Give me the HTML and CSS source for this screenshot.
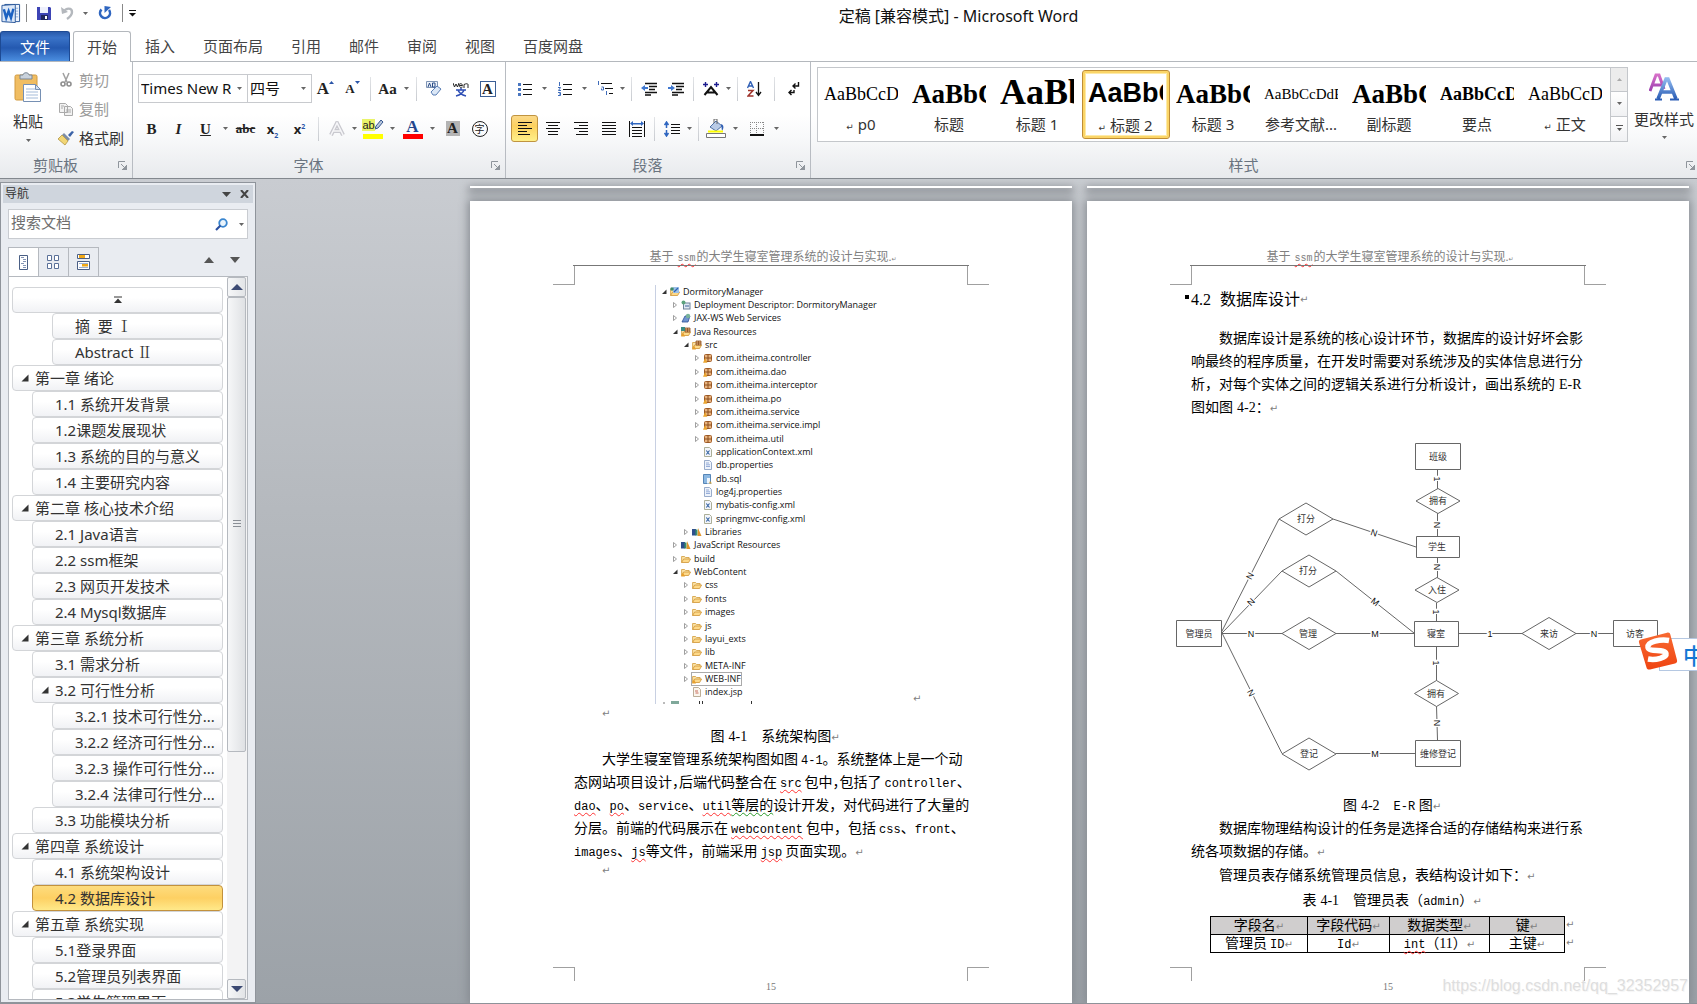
FILE: index.html
```html
<!DOCTYPE html>
<html lang="zh-CN">
<head>
<meta charset="utf-8">
<title>定稿 [兼容模式] - Microsoft Word</title>
<link rel="stylesheet" href="styles.css">
</head>
<body>
<svg class="defs" aria-hidden="true">
  <defs>
    <linearGradient id="gBlue" x1="0" y1="0" x2="0" y2="1"><stop offset="0" stop-color="#8fb8ee"/><stop offset="1" stop-color="#2a5db5"/></linearGradient>
    <linearGradient id="gPurple" x1="0" y1="0" x2="0" y2="1"><stop offset="0" stop-color="#d66fc8"/><stop offset="1" stop-color="#9b3fae"/></linearGradient>
    <linearGradient id="gOrange" x1="0" y1="0" x2="0" y2="1"><stop offset="0" stop-color="#f86a32"/><stop offset="1" stop-color="#ef4411"/></linearGradient>
  </defs>
  <symbol id="caret" viewBox="0 0 5 3"><path d="M0 0h5L2.500 3z" fill="#666"/></symbol>
  <symbol id="launch" viewBox="0 0 9 9"><path d="M.5 7V.5H7" fill="none" stroke="#8f959c"/><path d="M9 4v5H4zM3 3l4 4" fill="#8f959c" stroke="#8f959c"/></symbol>
  <symbol id="tri-open" viewBox="0 0 8 8"><path d="M7.500 .5v7h-7z" fill="#333"/></symbol>
  <symbol id="t-open" viewBox="0 0 6 6"><path d="M5.500 .5v4.500h-4.500z" fill="#333"/></symbol>
  <symbol id="t-shut" viewBox="0 0 6 6"><path d="M1.500 .5l3 2.500-3 2.500z" fill="#fff" stroke="#888" stroke-width=".8"/></symbol>
  <symbol id="folder" viewBox="0 0 10 10"><path d="M.6 8.500V2.500h3l1 1h3.500v1.500" fill="#fbe3a8" stroke="#d29a3a" stroke-width=".8"/><path d="M.6 8.500l2-3.500h7l-2 3.500z" fill="#fdd98a" stroke="#cf9433" stroke-width=".8"/></symbol>
  <symbol id="folderw" viewBox="0 0 10 10"><use href="#folder"/><path d="M0 9.500l2-4 2 4z" fill="#e8a02c"/></symbol>
  <symbol id="srcf" viewBox="0 0 10 10"><use href="#folder"/><path d="M4 1h5v4H4zM6.500 1v4M4 3h5" fill="#e7b37f" stroke="#8c4e1f" stroke-width=".8"/><path d="M0 9.500l2-4 2 4z" fill="#e8a02c"/></symbol>
  <symbol id="jres" viewBox="0 0 10 10"><use href="#srcf"/><path d="M0 0h4v4H0z" fill="#3b8c82"/></symbol>
  <symbol id="pkg" viewBox="0 0 10 10"><rect x="1.500" y="1.500" width="7" height="7" rx="1" fill="#e7b37f" stroke="#a5602b"/><path d="M5 1v8M1 5h8" stroke="#8c4e1f"/></symbol>
  <symbol id="pkgw" viewBox="0 0 10 10"><use href="#pkg"/><path d="M0 9.800l2.200-4.800 2.200 4.800z" fill="#eaa52f"/></symbol>
  <symbol id="doc" viewBox="0 0 10 10"><path d="M1.500 .5h5l2 2v7h-7z" fill="#eef3fb" stroke="#8fa3c4" stroke-width=".9"/><path d="M3 3h3M3 4.800h4M3 6.500h4" stroke="#7f9bcf" stroke-width=".8"/></symbol>
  <symbol id="xml" viewBox="0 0 10 10"><path d="M1.500 .5h5l2 2v7h-7z" fill="#f3f5fa" stroke="#a3a68c" stroke-width=".9"/><path d="M3.300 3.500l3.200 4M6.500 3.500l-3.200 4" stroke="#2f5f9f" stroke-width="1.100"/></symbol>
  <symbol id="sql" viewBox="0 0 10 10"><path d="M.5 .5h7v9h-7z" fill="#8cb8e2" stroke="#4a7cb0" stroke-width=".9"/><path d="M4 4h3v5.500H4z" fill="#eef5fc"/><path d="M7 7l2 2.500H6z" fill="#caa040"/></symbol>
  <symbol id="lib" viewBox="0 0 10 10"><path d="M0 2h4v6.500H0z" fill="#2f4f8c"/><path d="M3.500 2.500h2v6h-2z" fill="#39906c"/><path d="M6 1l3.500 8H5.500z" fill="#e0952c"/></symbol>
  <symbol id="proj" viewBox="0 0 10 10"><use href="#folder"/><path d="M3 0h6v6H3z" fill="#9cc0e8"/><path d="M4 5l4-4" stroke="#2f62b5" stroke-width="1.200"/><circle cx="2" cy="2" r="1.800" fill="#3f8a6c"/></symbol>
  <symbol id="dd" viewBox="0 0 10 10"><rect x="2.500" y="3" width="6.500" height="6" fill="#dfe8f2" stroke="#6c8299"/><circle cx="2.500" cy="2.500" r="2" fill="#5ba37c"/><path d="M4 6h4" stroke="#3d6398"/></symbol>
  <symbol id="jax" viewBox="0 0 10 10"><path d="M1 9l3-6h5l-2 6z" fill="#6f94cf" stroke="#2c4f95" stroke-width=".8"/><circle cx="7" cy="3" r="2.200" fill="#79b39b"/></symbol>
  <symbol id="jsp" viewBox="0 0 10 10"><path d="M1.500 .5h5l2 2v7h-7z" fill="#fbf6ee" stroke="#b4a58c" stroke-width=".9"/><path d="M3 4h3M3.500 6h3" stroke="#c76a5a"/></symbol>
</svg>

<header class="titlebar">
  <div class="qat">
    <svg class="wlogo" viewBox="0 0 21 21"><path d="M4 1h15.500v18H4z" fill="#eef4fc" stroke="#2a579a"/><path d="M12 5h6M12 8h6M12 11h6M12 14h6" stroke="#8fb0dc"/><path d="M1 2l14-1v19L1 19z" fill="#dce8f8" stroke="#2a579a"/><path d="M3 6l2.500 9 2.500-7 2.500 7L13 5.500" fill="none" stroke="#1c62c2" stroke-width="2.600"/></svg>
    <i class="vline"></i>
    <button aria-label="保存"><svg width="14" height="14" viewBox="0 0 14 14"><path d="M0 1h13l1 1v12H0z" fill="#3d44b5"/><path d="M3 1h8v6H3z" fill="#eef0fc"/><path d="M4 9h7v5H4z" fill="#20265e"/><path d="M8 10h2v3H8z" fill="#fff"/></svg></button>
    <button aria-label="撤消" class="undo"><svg width="13" height="14" viewBox="0 0 13 14"><path d="M0 1l1 7 6-2z" fill="#b4b8bd"/><path d="M2.500 6C5 1.500 11 1.500 11 6c0 3-2 5-5 7" fill="none" stroke="#b4b8bd" stroke-width="2.400"/></svg><svg class="caret"><use href="#caret"/></svg></button>
    <button aria-label="重复"><svg width="14" height="14" viewBox="0 0 14 14"><path d="M11 4A5 5 0 1 1 3.500 3.500" fill="none" stroke="#2f66c0" stroke-width="2.600"/><path d="M6.500 0v7L13 1z" fill="#2f66c0"/></svg></button>
    <i class="vline"></i>
    <button aria-label="自定义快速访问工具栏" class="more"><svg width="7" height="7" viewBox="0 0 7 7"><path d="M0 .5h7" stroke="#111"/><path d="M0 3h7L3.500 6.500z" fill="#111"/></svg></button>
  </div>
  <h1>定稿 [兼容模式] - Microsoft Word</h1>
</header>

<nav class="tabs">
  <button class="file">文件</button>
  <button class="tab active">开始</button>
  <button class="tab">插入</button><button class="tab">页面布局</button><button class="tab">引用</button><button class="tab">邮件</button><button class="tab">审阅</button><button class="tab">视图</button><button class="tab">百度网盘</button>
</nav>

<section class="ribbon">
  <div class="group clip">
    <div class="gbody clipbody">
      <button class="big">
        <svg width="28" height="30" viewBox="0 0 28 30"><rect x="1" y="3" width="22" height="25" rx="1.500" fill="#f0bd62" stroke="#d29a3f"/><path d="M6 7V3h3c0-3 6-3 6 0h3v4z" fill="#c9d2dc" stroke="#7a8794"/><path d="M9.500 12.500h12l5 5v12h-17z" fill="#fff" stroke="#7690b3"/><path d="M12 17h9M12 20h12M12 23h12M12 26h12" stroke="#a4bbd9"/><path d="M21.500 12.500v5h5z" fill="#d5e2f3" stroke="#7690b3"/></svg>
        <span>粘贴</span><svg class="caret"><use href="#caret"/></svg>
      </button>
      <div class="cliplist">
        <button class="off"><svg width="16" height="16" viewBox="0 0 16 16"><path d="M5 1l4 9M11 1L7 10" stroke="#a0a0a0" stroke-width="1.500"/><circle cx="5" cy="12" r="2" fill="none" stroke="#8f8f8f" stroke-width="1.600"/><circle cx="11" cy="12" r="2" fill="none" stroke="#8f8f8f" stroke-width="1.600"/></svg>剪切</button>
        <button class="off"><svg width="16" height="16" viewBox="0 0 16 16"><path d="M1.500 2.500h6l2 2v7h-8zM6.500 5.500h6l2 2v7h-8z" fill="#f2f2f2" stroke="#aaa"/><path d="M8 9h5M8 11h5M3 5h3M3 7h2" stroke="#aaa"/></svg>复制</button>
        <button><svg width="16" height="16" viewBox="0 0 16 16"><path d="M10 5l4-4 2 1-4 5z" fill="#3b63a8"/><path d="M6 3l6 6-2 2-6-6z" fill="#7e8ea6"/><path d="M4 5l6 6-3 4-7-6z" fill="#f2d675" stroke="#a98b35" stroke-width=".7"/></svg>格式刷</button>
      </div>
    </div>
    <div class="glabel">剪贴板<svg class="launch"><use href="#launch"/></svg></div>
  </div>

  <div class="group font">
    <div class="gbody">
      <div class="row">
        <label class="combo w110"><select aria-label="字体"><option>Times New Roman</option></select><svg class="caret"><use href="#caret"/></svg></label>
        <label class="combo w64"><select aria-label="字号"><option>四号</option></select><svg class="caret"><use href="#caret"/></svg></label>
        <button class="tb serif" aria-label="增大字体"><b class="f17">A</b><svg class="tick" viewBox="0 0 5 3"><path d="M0 3h5L2.500 0z" fill="#2a55a8"/></svg></button>
        <button class="tb serif" aria-label="缩小字体"><b class="f13">A</b><svg class="tick" viewBox="0 0 5 3"><path d="M0 0h5L2.500 3z" fill="#2a55a8"/></svg></button>
        <i class="sep"></i>
        <button class="dd w38 serif"><span><b class="f15">Aa</b></span><svg class="caret"><use href="#caret"/></svg></button>
        <i class="sep"></i>
        <button class="tb" aria-label="清除格式"><svg width="16" height="16" viewBox="0 0 16 16"><path d="M.5 .5h11v6H.5z" fill="#eef3fa" stroke="#7f95b5"/><path d="M2 6l1.500-4L5 6M6.500 2v4H9V2z" fill="none" stroke="#2b4d87"/><path d="M5 11l6-6 4 3-5 6H7z" fill="#dbe7f6" stroke="#5a7eb5"/></svg></button>
        <button class="tb" aria-label="拼音指南"><svg width="16" height="16" viewBox="0 0 16 16"><path d="M0 2l1.500 4L3 3l1.500 3L6 2M6.500 4.500h3C9 2 6.500 2 6.500 4.500S8 6.500 9.500 6M11 7V3.500c2-1 4-1 4 0V7" fill="none" stroke="#222"/><path d="M3 9h10M8 7v2M5 9c1 3 4 5 8 6M11 9c-1 3-4 5-8 6" fill="none" stroke="#2f4fb5" stroke-width="1.500"/></svg></button>
        <button class="tb serif" aria-label="字符边框"><b class="boxed">A</b></button>
      </div>
      <div class="row">
        <button class="tb serif"><b class="f15">B</b></button>
        <button class="tb serif"><b class="f15 it">I</b></button>
        <button class="dd w40 serif"><span><b class="f15 un">U</b></span><svg class="caret"><use href="#caret"/></svg></button>
        <button class="tb serif"><b class="f13 st">abc</b></button>
        <button class="tb"><b class="f13">x<sub>2</sub></b></button>
        <button class="tb"><b class="f13">x<sup>2</sup></b></button>
        <i class="sep s10"></i>
        <button class="dd w36" aria-label="文本效果"><span><svg width="16" height="16" viewBox="0 0 16 16"><path d="M2 14L8 2l6 12M4.500 10h7" fill="none" stroke="#c9c9cf" stroke-width="4"/><path d="M2 14L8 2l6 12M4.500 10h7" fill="none" stroke="#f6f6f8" stroke-width="1.500"/></svg></span><svg class="caret"><use href="#caret"/></svg></button>
        <button class="dd w40" aria-label="突出显示"><span class="hl"><em>ab</em><svg width="9" height="11" viewBox="0 0 9 11"><path d="M0 10l1-3 5-6 2 2-5 6z" fill="#b9c7dc" stroke="#35578f"/></svg></span><svg class="caret"><use href="#caret"/></svg></button>
        <button class="dd w40 serif" aria-label="字体颜色"><span><b class="fc">A</b></span><svg class="caret"><use href="#caret"/></svg></button>
        <button class="tb serif" aria-label="字符底纹"><b class="shade">A</b></button>
        <button class="tb" aria-label="带圈字符"><span class="ring">字</span></button>
      </div>
    </div>
    <div class="glabel">字体<svg class="launch"><use href="#launch"/></svg></div>
  </div>

  <div class="group para">
    <div class="gbody">
      <div class="row">
        <button class="dd w40" aria-label="项目符号"><span><svg width="14" height="14" viewBox="0 0 14 14"><path d="M5 2.500h9M5 7.500h9M5 12.500h9" stroke="#111"/><path d="M0 1h3v3H0zM0 6h3v3H0zM0 11h3v3H0z" fill="#4a76c0"/></svg></span><svg class="caret"><use href="#caret"/></svg></button>
        <button class="dd w40" aria-label="编号"><span><svg width="14" height="14" viewBox="0 0 14 14"><path d="M5 2.500h9M5 7.500h9M5 12.500h9" stroke="#111"/><path d="M1.500 0v4M0 5.500h2.500L.5 8.500h2.500M0 10.500h2.500v3H0M1 12h1.500" fill="none" stroke="#3f6cba"/></svg></span><svg class="caret"><use href="#caret"/></svg></button>
        <button class="dd w36" aria-label="多级列表"><span><svg width="16" height="15" viewBox="0 0 16 15"><path d="M4 2.500h11M8 7.500h8M12 12.500h4" stroke="#111"/><path d="M1.500 0v4M4.500 6h2v3h-2V7.500M9.500 10v4" fill="none" stroke="#3f6cba"/></svg></span><svg class="caret"><use href="#caret"/></svg></button>
        <i class="sep"></i>
        <button class="tb" aria-label="减少缩进量"><svg width="16" height="14" viewBox="0 0 16 14"><path d="M4 1.500h12M8 4.500h8M8 7.500h6M4 10.500h12M4 13h6" stroke="#111" stroke-width="1.500"/><path d="M0 6l4-3v2h3v2H4v2z" fill="#3f78d0"/></svg></button>
        <button class="tb" aria-label="增加缩进量"><svg width="16" height="14" viewBox="0 0 16 14"><path d="M4 1.500h12M8 4.500h8M8 7.500h6M4 10.500h12M4 13h6" stroke="#111" stroke-width="1.500"/><path d="M7 6L3 3v2H0v2h3v2z" fill="#3f78d0"/></svg></button>
        <i class="sep"></i>
        <button class="dd w36" aria-label="中文版式"><span><svg width="16" height="14" viewBox="0 0 16 14"><path d="M1.500 13L8 5l6.500 8M4 10.500h8" fill="none" stroke="#111" stroke-width="2"/><path d="M0 2.500h5M2.500 0v5M11 2.500h5M13.500 0v5" stroke="#1d1d8f" stroke-width="1.400"/></svg></span><svg class="caret"><use href="#caret"/></svg></button>
        <i class="sep"></i>
        <button class="tb" aria-label="排序"><svg width="15" height="16" viewBox="0 0 15 16"><path d="M.5 7L3.500 .5 6.500 7M1.500 5h4" fill="none" stroke="#2f5fb5" stroke-width="1.400"/><path d="M1 9.500h5L1 15h5.500" fill="none" stroke="#a0342c" stroke-width="1.500"/><path d="M11.500 1v13M9 11l2.500 3.500L14 11" fill="none" stroke="#111" stroke-width="1.300"/></svg></button>
        <i class="sep s12"></i>
        <button class="tb" aria-label="显示编辑标记"><svg width="12" height="14" viewBox="0 0 12 14"><path d="M10.500 0v4H5M7.500 1.500L5 4l2.500 2.500M6 8v2.500H1M3.500 8L1 10.500 3.500 13" fill="none" stroke="#111" stroke-width="1.400"/></svg></button>
      </div>
      <div class="row tight">
        <button class="tb on" aria-label="左对齐"><svg width="14" height="13" viewBox="0 0 14 13"><path d="M0 .5h14M0 3.500h9M0 6.500h14M0 9.500h9M0 12.500h12" stroke="#111"/></svg></button>
        <button class="tb" aria-label="居中"><svg width="14" height="13" viewBox="0 0 14 13"><path d="M0 .5h14M2 3.500h10M0 6.500h14M2 9.500h10M2 12.500h10" stroke="#111"/></svg></button>
        <button class="tb" aria-label="右对齐"><svg width="14" height="13" viewBox="0 0 14 13"><path d="M0 .5h14M5 3.500h9M0 6.500h14M5 9.500h9M2 12.500h12" stroke="#111"/></svg></button>
        <button class="tb" aria-label="两端对齐"><svg width="14" height="13" viewBox="0 0 14 13"><path d="M0 .5h14M0 3.500h14M0 6.500h14M0 9.500h14M0 12.500h14" stroke="#111"/></svg></button>
        <button class="tb" aria-label="分散对齐"><svg width="16" height="16" viewBox="0 0 16 16"><path d="M.5 0v16M15.500 0v16M3 6.500h10M3 9.500h10M3 12.500h10M3 15.500h10" stroke="#111"/><path d="M1 2.500L4 0v2h8V0l3 2.500L12 5V3.500H4V5z" fill="#2f66c0"/></svg></button>
        <i class="sep s6"></i>
        <button class="dd w36" aria-label="行距"><span><svg width="16" height="16" viewBox="0 0 16 16"><path d="M7 3.500h9M7 6.500h9M7 9.500h9M7 12.500h9" stroke="#111"/><path d="M2.500 1v6M.5 4l2-3 2 3M2.500 9v6M.5 12l2 3 2-3" fill="none" stroke="#2f66c0" stroke-width="1.500"/></svg></span><svg class="caret"><use href="#caret"/></svg></button>
        <i class="sep s6"></i>
        <button class="dd w40" aria-label="底纹"><span><svg width="20" height="19" viewBox="0 0 20 19"><path d="M4 8l6-6 6 5-6 5z" fill="#b9cbe6" stroke="#4c6fa5"/><path d="M8 4V0h3v5" fill="none" stroke="#666"/><path d="M15 5c3 1 3 4 1 7z" fill="#2f5fb5"/><path d="M2 12.500h15" stroke="#ff0" stroke-width="2"/><path d="M.5 14.500h19v4H.5z" fill="#fff" stroke="#777"/></svg></span><svg class="caret"><use href="#caret"/></svg></button>
        <button class="dd w40" aria-label="边框"><span><svg width="14" height="14" viewBox="0 0 14 14"><path d="M.5 0v12M6.500 0v12M13.500 0v12M0 .5h14M0 6.500h14" stroke="#888" stroke-dasharray="1 1"/><path d="M0 13h14" stroke="#111" stroke-width="2"/></svg></span><svg class="caret"><use href="#caret"/></svg></button>
      </div>
    </div>
    <div class="glabel">段落<svg class="launch"><use href="#launch"/></svg></div>
  </div>

  <div class="group styles">
    <div class="gbody stylebody">
      <div class="gallery">
        <button class="style"><span class="pv s18">AaBbCcD</span><span><small>↵</small> p0</span></button>
        <button class="style"><span class="pv s27">AaBbC</span><span>标题</span></button>
        <button class="style"><span class="pv s36">AaBb</span><span>标题 1</span></button>
        <button class="style sel"><span class="pv s27 sans">AaBbC</span><span><small>↵</small> 标题 2</span></button>
        <button class="style"><span class="pv s27">AaBbC</span><span>标题 3</span></button>
        <button class="style"><span class="pv s15">AaBbCcDdE</span><span>参考文献...</span></button>
        <button class="style"><span class="pv s27">AaBbC</span><span>副标题</span></button>
        <button class="style"><span class="pv s18 bold">AaBbCcD</span><span>要点</span></button>
        <button class="style"><span class="pv s18">AaBbCcD</span><span><small>↵</small> 正文</span></button>
        <div class="gscroll">
          <button class="dis" aria-label="上一行"><svg width="5" height="3" viewBox="0 0 5 3"><path d="M0 3h5L2.500 0z" fill="#aaa"/></svg></button>
          <button aria-label="下一行"><svg class="caret"><use href="#caret"/></svg></button>
          <button aria-label="其他"><svg width="7" height="7" viewBox="0 0 7 7"><path d="M0 .5h7" stroke="#555"/><path d="M1 3h5L3.500 6z" fill="#555"/></svg></button>
        </div>
      </div>
      <button class="big change">
        <svg width="30" height="28" viewBox="0 0 30 28"><path d="M1 18L7 2h3l5 14M4 12h8" fill="none" stroke="url(#gPurple)" stroke-width="3"/><path d="M9 26L17 6h2l8 20M12 19h11" fill="none" stroke="url(#gBlue)" stroke-width="3.500"/><path d="M6 26.500h7M21 26.500h9" stroke="#2a5db5" stroke-width="2"/></svg>
        <span>更改样式</span><svg class="caret"><use href="#caret"/></svg>
      </button>
    </div>
    <div class="glabel">样式<svg class="launch"><use href="#launch"/></svg></div>
  </div>
</section>

<main class="work">
  <aside class="navpane">
    <div class="nvhead"><span>导航</span><button aria-label="任务窗格选项"><svg width="9" height="5" viewBox="0 0 9 5"><path d="M0 0h9L4.500 5z" fill="#444"/></svg></button><button aria-label="关闭"><svg width="9" height="8" viewBox="0 0 9 8"><path d="M1 0l7 8M8 0L1 8" stroke="#444" stroke-width="2"/></svg></button></div>
    <div class="search"><input type="text" placeholder="搜索文档" aria-label="搜索文档"><button aria-label="搜索"><svg width="13" height="13" viewBox="0 0 13 13"><circle cx="8" cy="5" r="3.800" fill="#eaf4fc" stroke="#3a86cf" stroke-width="1.800"/><path d="M5.500 7.500L1 12" stroke="#2a4fa0" stroke-width="2.200"/></svg></button><button aria-label="搜索选项"><svg class="caret"><use href="#caret"/></svg></button></div>
    <div class="nvtabs">
      <button class="active" aria-label="标题"><svg width="10" height="15" viewBox="0 0 10 15"><path d="M.5 .5h8v14h-8z" fill="#fff" stroke="#4a5f85"/><path d="M2 2.500h3M4 4.500h3M4 6.500h3M2 8.500h3M4 10.500h3M4 12.500h3" stroke="#8495b5"/></svg></button>
      <button aria-label="页面"><svg width="13" height="15" viewBox="0 0 13 15"><path d="M.5 .5h4v5h-4zM7.500 .5h4v5h-4zM.5 8.500h4v5h-4zM7.500 8.500h4v5h-4z" fill="#fff" stroke="#5a7099"/></svg></button>
      <button aria-label="结果"><svg width="14" height="16" viewBox="0 0 14 16"><path d="M.5 .5h12v4H.5zM.5 7.500h12v8H.5z" fill="#fff" stroke="#4a5f85"/><path d="M2 2.500h6M5 11h6" stroke="#f0a818" stroke-width="3"/><path d="M2 9.500h9M2 13.500h9" stroke="#9db0cf"/></svg></button>
      <span class="updown"><svg width="10" height="6" viewBox="0 0 10 6"><path d="M0 6h10L5 0z" fill="#555"/></svg><svg width="10" height="6" viewBox="0 0 10 6"><path d="M0 0h10L5 6z" fill="#555"/></svg></span>
    </div>
    <div class="outline">
      <div class="items">
        <a href="#" class="top" aria-label="跳转到文档开头"><svg width="8" height="7" viewBox="0 0 8 7"><path d="M0 .5h8" stroke="#333"/><path d="M0 6.500h8L4 2z" fill="#333"/></svg></a>
        <a href="#" class="l3">摘&nbsp; 要&nbsp; <span class="roman">Ⅰ</span></a>
        <a href="#" class="l3">Abstract&nbsp;<span class="roman">Ⅱ</span></a>
        <a href="#" class="l1"><svg><use href="#tri-open"/></svg>第一章 绪论</a>
        <a href="#" class="l2">1.1 系统开发背景</a>
        <a href="#" class="l2">1.2课题发展现状</a>
        <a href="#" class="l2">1.3 系统的目的与意义</a>
        <a href="#" class="l2">1.4 主要研究内容</a>
        <a href="#" class="l1"><svg><use href="#tri-open"/></svg>第二章 核心技术介绍</a>
        <a href="#" class="l2">2.1 Java语言</a>
        <a href="#" class="l2">2.2 ssm框架</a>
        <a href="#" class="l2">2.3 网页开发技术</a>
        <a href="#" class="l2">2.4 Mysql数据库</a>
        <a href="#" class="l1"><svg><use href="#tri-open"/></svg>第三章 系统分析</a>
        <a href="#" class="l2">3.1 需求分析</a>
        <a href="#" class="l2"><svg><use href="#tri-open"/></svg>3.2 可行性分析</a>
        <a href="#" class="l3">3.2.1 技术可行性分...</a>
        <a href="#" class="l3">3.2.2 经济可行性分...</a>
        <a href="#" class="l3">3.2.3 操作可行性分...</a>
        <a href="#" class="l3">3.2.4 法律可行性分...</a>
        <a href="#" class="l2">3.3 功能模块分析</a>
        <a href="#" class="l1"><svg><use href="#tri-open"/></svg>第四章 系统设计</a>
        <a href="#" class="l2">4.1 系统架构设计</a>
        <a href="#" class="l2 cur">4.2 数据库设计</a>
        <a href="#" class="l1"><svg><use href="#tri-open"/></svg>第五章 系统实现</a>
        <a href="#" class="l2">5.1登录界面</a>
        <a href="#" class="l2">5.2管理员列表界面</a>
        <a href="#" class="l2">5.3学生管理界面</a>
      </div>
      <div class="scroll">
        <button aria-label="向上滚动"><svg width="12" height="6" viewBox="0 0 12 6"><path d="M0 6h12L6 0z" fill="#3c4a73"/></svg></button>
        <div class="thumb"><i></i></div>
        <button aria-label="向下滚动"><svg width="12" height="6" viewBox="0 0 12 6"><path d="M0 0h12L6 6z" fill="#3c4a73"/></svg></button>
      </div>
    </div>
  </aside>

  <div class="canvas">
    <div class="prev"></div><div class="prev"></div>
    <article class="page">
      <header class="phead">基于<span class="ph-en sp">ssm</span>的大学生寝室管理系统的设计与实现.<span class="cr">↵</span></header>
      <div class="marks"><i></i><i></i></div>
      <div class="treewrap">
        <ul class="tree">
          <li class="d0"><svg><use href="#t-open"/></svg><svg class="ic"><use href="#proj"/></svg>DormitoryManager</li>
          <li class="d1"><svg><use href="#t-shut"/></svg><svg class="ic"><use href="#dd"/></svg>Deployment Descriptor: DormitoryManager</li>
          <li class="d1"><svg><use href="#t-shut"/></svg><svg class="ic"><use href="#jax"/></svg>JAX-WS Web Services</li>
          <li class="d1"><svg><use href="#t-open"/></svg><svg class="ic"><use href="#jres"/></svg>Java Resources</li>
          <li class="d2"><svg><use href="#t-open"/></svg><svg class="ic"><use href="#srcf"/></svg>src</li>
          <li class="d3"><svg><use href="#t-shut"/></svg><svg class="ic"><use href="#pkgw"/></svg>com.itheima.controller</li>
          <li class="d3"><svg><use href="#t-shut"/></svg><svg class="ic"><use href="#pkgw"/></svg>com.itheima.dao</li>
          <li class="d3"><svg><use href="#t-shut"/></svg><svg class="ic"><use href="#pkg"/></svg>com.itheima.interceptor</li>
          <li class="d3"><svg><use href="#t-shut"/></svg><svg class="ic"><use href="#pkgw"/></svg>com.itheima.po</li>
          <li class="d3"><svg><use href="#t-shut"/></svg><svg class="ic"><use href="#pkgw"/></svg>com.itheima.service</li>
          <li class="d3"><svg><use href="#t-shut"/></svg><svg class="ic"><use href="#pkgw"/></svg>com.itheima.service.impl</li>
          <li class="d3"><svg><use href="#t-shut"/></svg><svg class="ic"><use href="#pkg"/></svg>com.itheima.util</li>
          <li class="d3"><svg></svg><svg class="ic"><use href="#xml"/></svg>applicationContext.xml</li>
          <li class="d3"><svg></svg><svg class="ic"><use href="#doc"/></svg>db.properties</li>
          <li class="d3"><svg></svg><svg class="ic"><use href="#sql"/></svg>db.sql</li>
          <li class="d3"><svg></svg><svg class="ic"><use href="#doc"/></svg>log4j.properties</li>
          <li class="d3"><svg></svg><svg class="ic"><use href="#xml"/></svg>mybatis-config.xml</li>
          <li class="d3"><svg></svg><svg class="ic"><use href="#xml"/></svg>springmvc-config.xml</li>
          <li class="d2"><svg><use href="#t-shut"/></svg><svg class="ic"><use href="#lib"/></svg>Libraries</li>
          <li class="d1"><svg><use href="#t-shut"/></svg><svg class="ic"><use href="#lib"/></svg>JavaScript Resources</li>
          <li class="d1"><svg><use href="#t-shut"/></svg><svg class="ic"><use href="#folder"/></svg>build</li>
          <li class="d1"><svg><use href="#t-open"/></svg><svg class="ic"><use href="#folderw"/></svg>WebContent</li>
          <li class="d2"><svg><use href="#t-shut"/></svg><svg class="ic"><use href="#folder"/></svg>css</li>
          <li class="d2"><svg><use href="#t-shut"/></svg><svg class="ic"><use href="#folder"/></svg>fonts</li>
          <li class="d2"><svg><use href="#t-shut"/></svg><svg class="ic"><use href="#folder"/></svg>images</li>
          <li class="d2"><svg><use href="#t-shut"/></svg><svg class="ic"><use href="#folder"/></svg>js</li>
          <li class="d2"><svg><use href="#t-shut"/></svg><svg class="ic"><use href="#folder"/></svg>layui_exts</li>
          <li class="d2"><svg><use href="#t-shut"/></svg><svg class="ic"><use href="#folder"/></svg>lib</li>
          <li class="d2"><svg><use href="#t-shut"/></svg><svg class="ic"><use href="#folder"/></svg>META-INF</li>
          <li class="d2"><svg><use href="#t-shut"/></svg><span class="focus"><svg class="ic"><use href="#folderw"/></svg>WEB-INF</span></li>
          <li class="d2"><svg></svg><svg class="ic"><use href="#jsp"/></svg>index.jsp</li>
        </ul>
        <svg class="cut" width="90" height="4" viewBox="0 0 90 4"><path d="M0 3h2" stroke="#777"/><path d="M8 4V1h8v3z" fill="#7fa89a"/><path d="M36.500 1v3M39.500 1v3M88.500 1v3" stroke="#333"/></svg>
        <span class="cr">↵</span>
      </div>
      <p class="blank"><span class="cr">↵</span></p>
      <p class="caption">图<span class="tn">4-1</span>　系统架构图<span class="cr">↵</span></p>
      <p class="body">大学生寝室管理系统架构图如图<span class="en">4-1</span>。系统整体上是一个动<br>态网站项目设计<span class="half">，</span>后端代码整合在<span class="en sp">src</span>包中<span class="half">，</span>包括了<span class="en">controller</span>、<br><span class="en first sp">dao</span>、<span class="en first sp">po</span>、<span class="en first">service</span>、<span class="en first sp">util</span><span class="gr">等层的</span>设计开发，对代码进行了大量的<br>分层。前端的代码展示在<span class="en sp">webcontent</span>包中，包括<span class="en">css</span>、<span class="en first">front</span>、<br><span class="en first">images</span>、<span class="en first sp">js</span>等文件，前端采用<span class="en sp">jsp</span>页面实现。<span class="cr">↵</span></p>
      <p class="blank after"><span class="cr">↵</span></p>
      <div class="marks foot"><i></i><i></i></div>
      <footer class="pno">15</footer>
    </article>

    <article class="page">
      <header class="phead">基于<span class="ph-en sp">ssm</span>的大学生寝室管理系统的设计与实现.<span class="cr">↵</span></header>
      <div class="marks"><i></i><i></i></div>
      <h2><span class="tn">4.2</span>数据库设计<span class="cr">↵</span></h2>
      <p class="body">数据库设计是系统的核心设计环节，数据库的设计好坏会影<br>响最终的程序质量，在开发时需要对系统涉及的实体信息进行分<br>析，对每个实体之间的逻辑关系进行分析设计，画出系统的<span class="tn">E-R</span><br>图如图<span class="tn">4-2</span>：<span class="cr">↵</span></p>
      <svg class="er" width="495" height="340" viewBox="1170 436 495 340">
        <g fill="none" stroke="#666">
          <path d="M1437.500 470v19M1437.500 513v23M1437.500 558v20M1436.500 603v18M1436.500 647v34M1436.500 706l1 34M1333 519l83 28M1279 519l-58 114M1282 571l-60 62M1336 571l78 62M1222 633.500h60M1336 633.500h78M1459 633.500h63M1576 633.500h37M1222 633l60 120.500M1336 753.500h80"/>
        </g>
        <g fill="#fff" stroke="#666">
          <path d="M1415.500 443.500h45v26h-45zM1416.500 536.500h43v21h-43zM1176.500 620.500h45v26h-45zM1414.500 621.500h44v25h-44zM1613.500 620.500h44v26h-44zM1415.500 740.500h45v26h-45z"/>
          <path d="M1438 488.500l22 12.500-22 12.500-22-12.500zM1437 577.500l22 12.500-22 12.500-22-12.500zM1436.500 680.500l22 13-22 13-22-13zM1306 503l27 16-27 16-27-16zM1309 555l27 16-27 16-27-16zM1309 617.500l27 16-27 16-27-16zM1549 617.500l27 16-27 16-27-16zM1309 738l27 16-27 16-27-16z"/>
        </g>
        <g class="ertext">
          <text x="1438" y="460">班级</text><text x="1438" y="504">拥有</text><text x="1437" y="550">学生</text><text x="1437" y="593">入住</text>
          <text x="1306" y="522">打分</text><text x="1308" y="574">打分</text><text x="1199" y="637">管理员</text><text x="1308" y="637">管理</text><text x="1436" y="637">寝室</text><text x="1549" y="637">来访</text><text x="1635" y="637">访客</text><text x="1436" y="697">拥有</text><text x="1309" y="757">登记</text><text x="1438" y="757">维修登记</text>
        </g>
        <g class="erlab">
          <g transform="translate(1437 479) rotate(90)"><text y="3">1</text></g><g transform="translate(1437 525) rotate(90)"><text y="3">N</text></g><g transform="translate(1437 567) rotate(90)"><text y="3">N</text></g><g transform="translate(1436 612) rotate(90)"><text y="3">1</text></g>
          <g transform="translate(1374 533) rotate(18)"><text y="3">N</text></g><g transform="translate(1250 576) rotate(-63)"><text y="3">N</text></g><g transform="translate(1251 602) rotate(-46)"><text y="3">N</text></g><g transform="translate(1375 602) rotate(38)"><text y="3">M</text></g>
          <text x="1251" y="637">N</text><text x="1375" y="637">M</text><text x="1490" y="637">1</text><text x="1594" y="637">N</text>
          <g transform="translate(1436 663) rotate(90)"><text y="3">1</text></g><g transform="translate(1437 723) rotate(90)"><text y="3">N</text></g><g transform="translate(1251 693) rotate(63)"><text y="3">N</text></g><text x="1375" y="757">M</text>
        </g>
      </svg>
      <p class="caption">图<span class="tn">4-2</span>　<span class="en first">E-R</span> 图<span class="cr">↵</span></p>
      <p class="body">数据库物理结构设计的任务是选择合适的存储结构来进行系<br>统各项数据的存储。<span class="cr">↵</span></p>
      <p class="body next">管理员表存储系统管理员信息，表结构设计如下：<span class="cr">↵</span></p>
      <p class="caption tcap">表<span class="tn">4-1</span>　管理员表（<span class="en first">admin</span>）<span class="cr">↵</span></p>
      <div class="tablerow">
        <table>
          <thead><tr><th>字段名<span class="cr">↵</span></th><th>字段代码<span class="cr">↵</span></th><th>数据类型<span class="cr">↵</span></th><th>键<span class="cr">↵</span></th></tr></thead>
          <tbody><tr><td>管理员<span class="en">ID</span><span class="cr">↵</span></td><td><span class="en first">Id</span><span class="cr">↵</span></td><td><span class="en first sp">int</span>（11）<span class="cr">↵</span></td><td>主键<span class="cr">↵</span></td></tr></tbody>
        </table>
        <div class="rowends"><span class="cr">↵</span><span class="cr">↵</span></div>
      </div>
      <div class="marks foot"><i></i><i></i></div>
      <footer class="pno">15</footer>
    </article>
  </div>
</main>

<div class="watermark">https://blog.csdn.net/qq_32352957</div>
<div class="ime"><svg width="40" height="38" viewBox="0 0 40 38"><path d="M3 7.500L29 .7c2-.5 3 .3 3.400 2L39 28c.4 2-.3 3-2 3.400L12 37.500c-2 .4-3-.3-3.500-2L1 10.500c-.4-1.700.3-2.600 2-3z" fill="url(#gOrange)"/><path d="M31 8.500c-8-1.500-22 1-21 7 1 5 17 1 18 6 .8 4-10 7-18 5.500" fill="none" stroke="#fff" stroke-width="5.500"/></svg><span>中</span></div>
</body>
</html>
```
FILE: styles.css
```css
* { box-sizing: border-box; }
html, body { height: 100%; }
body {
  margin: 0;
  display: flex;
  flex-direction: column;
  overflow: hidden;
  position: relative;
  background: #fff;
  color: #333;
  font: 15px/20px "Noto Sans", "Noto Sans CJK SC", sans-serif;
}
.defs { position: absolute; width: 0; height: 0; }
button { border: 0; padding: 0; background: none; font: inherit; color: inherit; white-space: nowrap; }
svg { display: block; flex: none; }
.caret { width: 5px; height: 3px; }
p, h1, h2, ul { margin: 0; padding: 0; }

/* title bar */
.titlebar { height: 31px; flex: none; display: grid; grid-template-columns: 1fr auto 1fr; align-items: center; }
.titlebar h1 { font-size: 16px; font-weight: 400; color: #111; grid-column: 2; margin-left: 220px; }
.titlebar .qat { grid-column: 1; width: 0; }
.qat { display: flex; align-items: center; gap: 10px; padding-left: 1px; height: 26px; align-self: start; }
.wlogo { width: 20px; height: 21px; margin-right: -5px; }
.vline { width: 1px; height: 18px; background: #888; flex: none; }
.undo { display: flex; align-items: center; gap: 9px; }
.more { padding-left: 0; margin-left: -4px; }

/* tabs */
.tabs { display: flex; height: 31px; flex: none; border-bottom: 1px solid #b4b8bd; }
.tabs button { color: #444; }
.file { width: 70px; margin-right: 3px; border-radius: 3px 3px 0 0; background: linear-gradient(#2a5bab, #3a73c8 20%, #2459b0 55%, #4b8ee0); }
.tabs .file { color: #fff; border: 1px solid #1d4a94; border-bottom: 0; }
.tab { padding: 0 14px; }
.tab.active { background: #fff; border: 1px solid #b4b8bd; border-bottom: 0; padding: 0 13px; border-radius: 3px 3px 0 0; margin-bottom: -1px; }

/* ribbon */
.ribbon { display: flex; height: 117px; flex: none; border-bottom: 1px solid #83888e; background: linear-gradient(#fff 45%, #f8f9fa 65%, #e8eaed); }
.group { display: flex; flex-direction: column; border-right: 1px solid #b8bcc2; flex: none; }
.clip { width: 133px; }
.font { width: 373px; }
.para { width: 305px; }
.styles { flex: 1; border-right: 0; min-width: 0; }
.gbody { height: 92px; padding: 10px 0 0 5px; display: flex; flex-direction: column; gap: 7px; }
.glabel { height: 25px; display: grid; grid-template-columns: 1fr auto 1fr 20px; align-items: center; color: #6a7480; padding: 0 1px 1px 0; }
.glabel::before { content: ""; }
.glabel .launch { grid-column: 4; justify-self: end; width: 9px; height: 9px; margin-right: 4px; }
.styles .glabel .launch { margin-right: 1px; }
.clipbody { flex-direction: row; padding: 10px 0 0 6px; gap: 5px; }
.big { width: 44px; display: flex; flex-direction: column; align-items: center; gap: 9px; color: #333; }
.big .caret { margin-top: -1px; }
.cliplist { display: flex; flex-direction: column; gap: 9px; margin-top: -2px; }
.cliplist button { display: flex; align-items: center; gap: 5px; color: #333; padding-left: 3px; }
.cliplist .off { color: #9b9b9b; }

.row { display: flex; align-items: center; height: 33px; }
.tight { gap: 1px; }
.combo { display: grid; height: 29px; border: 1px solid #c8cace; background: #fff; align-items: center; }
.combo > * { grid-area: 1 / 1; }
.combo .caret { justify-self: end; margin-right: 5px; }
.combo select { appearance: none; border: 0; background: none; font: inherit; color: #111; width: 100%; height: 27px; padding: 0 16px 2px 2px; }
.w110 { width: 110px; }
.w64 { width: 65px; margin-left: -1px; }
.w36 { width: 36px; }
.w38 { width: 38px; }
.w40 { width: 40px; }
.tb { width: 27px; height: 27px; display: flex; align-items: center; justify-content: center; color: #222; }
.tb.on { border: 1px solid #c09440; border-radius: 3px; background: linear-gradient(#fbd98a, #fcd15f 40%, #fff08a); }
.dd { height: 27px; display: flex; align-items: center; justify-content: space-between; color: #222; }
.dd > span { width: 27px; display: flex; justify-content: center; }
.dd > .caret { margin: 0 auto; }
.sep { width: 8px; height: 24px; flex: none; background: linear-gradient(#e2e4e7, #c8cbd0) center / 1px 100% no-repeat; }
.s6 { width: 6px; }
.s10 { width: 10px; }
.s12 { width: 12px; }
.serif { font-family: "Liberation Serif", serif; }
.f17 { font-size: 17px; }
.f15 { font-size: 15px; }
.f13 { font-size: 13px; }
.it { font-style: italic; }
.un { text-decoration: underline; }
.st { text-decoration: line-through; }
.tick { width: 5px; height: 3px; align-self: flex-start; margin-top: 6px; }
sub, sup { font-size: 7px; line-height: 0; color: #2a55a8; }
.boxed { width: 16px; height: 16px; border: 1px solid #3b5f95; line-height: 14px; text-align: center; }
.shade { width: 14px; height: 15px; background: #b4b4b4; line-height: 15px; text-align: center; }
.ring { width: 16px; height: 16px; border: 1px solid #222; border-radius: 50%; font-size: 10px; line-height: 14px; }
.dd > .hl { width: 20px; margin: 0 3px 0 4px; border-bottom: 5px solid #ff0; height: 20px; }
.hl em { font: 11px/12px "Liberation Sans", sans-serif; background: #e9f36a; height: 12px; }
.fc { width: 20px; height: 20px; line-height: 15px; border-bottom: 5px solid #f00; color: #24468c; font-size: 17px; }

.stylebody { flex-direction: row; padding: 5px 2px 0 6px; gap: 5px; justify-content: space-between; }
.gallery { display: flex; height: 75px; border: 1px solid #c4c7cb; background: #fff; min-width: 0; flex: 0 1 812px; }
.style { width: 88px; flex: none; display: grid; grid-template-rows: 44px 20px; padding: 2px 8px 2px 6px; color: #333; align-items: center; }
.style.sel { border: 1px solid #bf8d35; border-radius: 3px; box-shadow: inset 0 0 0 2px #fbd567, inset 0 0 0 3px #fdeaa8; margin: 2px 0; padding: 0 6px 0 5px; }
.style.sel .pv { line-height: 45px; }
.pv { overflow: hidden; white-space: nowrap; text-align: left; color: #000; font-family: "Liberation Serif", serif; line-height: 48px; height: 44px; }
.style small { font: 9px/9px "DejaVu Sans", sans-serif; }
.s15 { font-size: 15px; }
.s18 { font-size: 18px; }
.s27 { font-size: 27px; font-weight: 700; }
.s36 { font-size: 36px; font-weight: 700; line-height: 44px; }
.bold { font-weight: 700; }
.sans { font-family: "Liberation Sans", sans-serif; }
.gscroll { width: 18px; display: grid; grid-template-rows: repeat(3, 1fr); margin-left: auto; border-left: 1px solid #c4c7cb; }
.gscroll button { display: grid; place-items: center; border-bottom: 1px solid #c4c7cb; background: linear-gradient(#fff, #f0f1f3); }
.gscroll .dis { background: #ececec; }
.gscroll button:last-child { border-bottom: 0; }
.change { width: 62px; padding-top: 6px; gap: 8px; align-self: flex-start; }

/* workspace */
.work { flex: 1; min-height: 0; display: flex; background: linear-gradient(#c9ccd1, #b5b9be 40%, #9ca2a8); border-bottom: 1px solid #8d9299; }
.navpane { width: 256px; flex: none; margin-top: 3px; border: 1px solid #8f949b; background: #e9ecf1; padding: 2px; display: flex; flex-direction: column; }
.nvhead { display: flex; align-items: center; height: 18px; flex: none; background: #cfd5dd; padding: 0 4px 0 2px; font-size: 12px; gap: 9px; }
.nvhead span { flex: 1; }
.search { display: flex; align-items: center; height: 30px; flex: none; margin: 6px 5px 0; border: 1px solid #c9ccd1; background: #fff; padding-right: 3px; }
.search input { flex: 1; min-width: 0; border: 0; padding: 0 2px 4px; font: inherit; background: none; }
.search input::placeholder { color: #6f6f6f; }
.search button + button { margin-left: 11px; }
.nvtabs { display: flex; height: 29px; flex: none; margin: 8px 5px 0; }
.nvtabs button { width: 30px; border: 1px solid #b5b9bf; border-left-width: 0; border-bottom: 0; display: grid; place-items: center; }
.nvtabs .active { width: 31px; border-left-width: 1px; background: #fff; }
.updown { flex: 1; display: flex; justify-content: flex-end; align-items: center; gap: 16px; padding: 0 8px 4px 0; }
.outline { flex: 1; min-height: 0; margin: 0 5px; border: 1px solid #b5b9bf; background: #fff; display: flex; overflow: hidden; }
.items { flex: 1; padding: 10px 4px 0 3px; overflow: hidden; }
.items a { display: flex; align-items: center; height: 26px; border: 1px solid #d3d5d8; border-radius: 4px; background: linear-gradient(#fff 40%, #f1f2f5); color: #333; text-decoration: none; white-space: nowrap; overflow: hidden; }
.items svg { width: 8px; height: 8px; margin: 0 6px 0 -14px; }
.items .top { justify-content: center; }
.items .top svg { margin: 0; }
.items .l1 { padding-left: 22px; }
.items .l2 { margin-left: 20px; padding-left: 22px; }
.items .l3 { margin-left: 40px; padding-left: 22px; }
.items .roman { font-family: "Noto Serif CJK SC", "Noto Sans CJK SC", serif; }
.items .cur { border-color: #c2913d; background: linear-gradient(#fddc7e, #fdd063 50%, #ffe98a); }
.scroll { width: 20px; flex: none; background: #f3f3f4; display: flex; flex-direction: column; padding-right: 1px; }
.scroll button { height: 20px; flex: none; border: 1px solid #b5b9bf; border-radius: 2px; display: grid; place-items: center; background: linear-gradient(90deg, #f6f7f8, #e2e4e7); }
.scroll button:last-child { margin-top: auto; }
.thumb { height: 63%; border: 1px solid #b5b9bf; border-radius: 2px; background: linear-gradient(90deg, #f6f7f8, #dfe1e4); display: grid; place-items: center; }
.thumb i { width: 8px; height: 8px; background: repeating-linear-gradient(#8a8f96 0 1px, transparent 1px 3px); }

.canvas { flex: 1; min-width: 0; overflow: hidden; display: grid; grid-template-columns: 602px 602px; grid-template-rows: 2px 1fr; column-gap: 15px; row-gap: 13px; justify-content: end; padding: 7px 8px 0 0; }
.prev { background: #fff; box-shadow: 0 3px 9px 2px #7d8287; }
.page { background: #fff; box-shadow: 0 0 9px 2px #858a90; padding: 0 104px; display: flex; flex-direction: column; color: #000; font: 14px/23px "Liberation Serif", "Noto Sans CJK SC", serif; white-space: nowrap; min-height: 0; position: relative; }
.cr { font: 10px/10px "DejaVu Sans", sans-serif; color: #808080; }
.phead { margin-top: 48px; height: 16px; text-align: center; font-size: 12px; line-height: 16px; color: #808080; padding-left: 4px; }
.ph-en { font: 10px/16px "Liberation Mono", monospace; margin: 0 1px 0 4px; }
.phead .cr { font-size: 6px; }
.marks { height: 20px; flex: none; border-top: 1px solid #808080; display: flex; justify-content: space-between; margin: 0 -21px; border-image: linear-gradient(90deg, transparent 21px, #777 21px, #777 calc(100% - 21px), transparent calc(100% - 21px)) 1; }
.marks i { width: 22px; border-bottom: 1px solid #a0a0a0; border-right: 1px solid #a0a0a0; }
.marks i:last-child { border-right: 0; border-left: 1px solid #a0a0a0; }
.marks.foot { border: 0; height: 14px; margin-top: auto; }
.marks.foot i { border-bottom: 0; border-top: 1px solid #a0a0a0; }
.pno { height: 22px; text-align: center; font-size: 10px; line-height: 12px; color: #777; flex: none; }
.treewrap { margin: 0 0 0 81px; border-left: 1px solid #c8d0e2; height: 419px; flex: none; position: relative; color: #111; }
.tree { list-style: none; height: 414px; display: grid; grid-auto-rows: 1fr; font: 9px/12px "Open Sans", sans-serif; }
.tree li { display: flex; align-items: center; gap: 2px; min-height: 0; }
.tree svg { width: 6px; height: 6px; margin-right: 1px; }
.tree .ic { width: 10px; height: 10px; margin-right: 1px; }
.d0 { padding-left: 5px; }
.d1 { padding-left: 16px; }
.d2 { padding-left: 27px; }
.d3 { padding-left: 38px; }
.focus { display: flex; align-items: center; gap: 2px; outline: 1px solid #aaa; height: 12px; }
.cut { margin: 1px 0 0 7px; }
.treewrap .cr { position: absolute; left: 257px; bottom: 0; }
.blank { line-height: 18px; padding-left: 28px; }
.blank.after { line-height: 14px; }
.caption { text-align: center; padding-left: 8px; }
.treewrap ~ .caption { margin-top: 3px; line-height: 23px; }
.body { text-indent: 28px; }
.body.next { margin-top: 1px; }
.caption.tcap { margin-top: 2px; }
.en { font: 12px/20px "Liberation Mono", monospace; margin-left: 3px; }
.tn { margin-left: 4px; }
.half { font-feature-settings: "halt"; }
.sp { text-decoration: underline wavy #f33 1px; text-underline-offset: 2px; }
.en.sp { margin-right: 3px; }
.en.first { margin-left: 0; margin-right: 0; }
.gr { text-decoration: underline wavy #2a9a2a 1px; text-underline-offset: 2px; }
h2 { font: 16px/24px "Liberation Serif", "Noto Sans CJK SC", serif; margin: 3px 0 15px -6px; display: flex; align-items: center; }
h2::before { content: ""; width: 4px; height: 4px; background: #000; margin: 0 2px 6px 0; }
h2 .tn { margin: 0 9px 0 0; }
.er { margin: 17px 0 18px -21px; overflow: visible; }
.er text { text-anchor: middle; }
.ertext { font: 9px "Noto Sans CJK SC", sans-serif; fill: #333; }
.erlab { font: 9px "Liberation Sans", sans-serif; fill: #111; paint-order: stroke; stroke: #fff; stroke-width: 3px; }
.tablerow { display: flex; margin: 4px 0 0 19px; }
table { border-collapse: collapse; width: 355px; table-layout: fixed; }
th, td { border: 1px solid #000; padding: 0; height: 18px; line-height: 17px; text-align: center; font-weight: 400; }
th { background: #d0cece; }
td .en { line-height: 12px; }
th:nth-child(1) { width: 97px; }
th:nth-child(2) { width: 82px; }
th:nth-child(3) { width: 100px; }
.rowends { display: grid; grid-auto-rows: 18px; align-items: center; padding-left: 1px; }

/* overlays */
.watermark { position: absolute; right: 9px; bottom: 8px; font: 16px/20px "Liberation Sans", sans-serif; color: #dedede; text-shadow: 1px 1px 1px #f4f4f4; }
.ime { position: absolute; right: -6px; top: 638px; width: 44px; height: 33px; background: #fff; border: 1px solid #b5c8e2; color: #1478d4; font: 500 22px/30px "Noto Sans CJK SC", sans-serif; padding-left: 23px; }
.ime svg { position: absolute; left: -22px; top: -7px; }
```
